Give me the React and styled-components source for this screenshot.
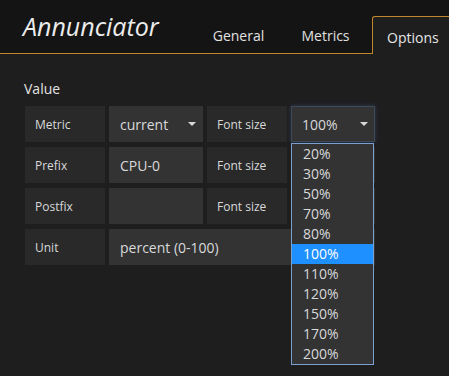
import styled, { createGlobalStyle } from "styled-components";

const Global = createGlobalStyle`
  html, body {
    margin: 0;
    padding: 0;
    background: #1f1e1f;
  }
  body {
    font-family: "Open Sans", "Liberation Sans", sans-serif;
    color: #d8d9da;
  }
`;

const Page = styled.div`
  width: 449px;
  height: 376px;
  overflow: hidden;
  background: #1f1e1f;
`;

const Header = styled.div`
  display: flex;
  align-items: flex-end;
  height: 54px;
  background: #141414;
`;

const Title = styled.div`
  flex: 0 0 auto;
  align-self: stretch;
  display: flex;
  align-items: center;
  padding: 0 0 1px 23px;
  width: 174px;
  font-size: 25px;
  font-style: italic;
  color: #ececec;
  border-bottom: 1px solid #c0872b;
`;

const Tab = styled.div`
  width: ${(p) => p.w}px;
  height: 38px;
  display: flex;
  align-items: center;
  justify-content: center;
  padding-top: 2px;
  font-size: 14px;
  color: #e0e0e0;
  box-sizing: border-box;
  border-bottom: 1px solid #c0872b;
`;

const ActiveTab = styled.div`
  flex: 1 1 auto;
  height: 38px;
  display: flex;
  align-items: center;
  padding: 3px 0 0 14px;
  font-size: 14px;
  color: #e6e6e6;
  box-sizing: border-box;
  background: #1f1e1f;
  border-top: 1px solid #c0872b;
  border-left: 1px solid #c0872b;
  border-top-left-radius: 3px;
`;

const Spacer = styled.div`
  width: ${(p) => p.w}px;
  height: 38px;
  border-bottom: 1px solid #c0872b;
  box-sizing: border-box;
`;

const Body = styled.div`
  padding: 26px 0 0 25px;
`;

const SectionTitle = styled.div`
  font-size: 14px;
  color: #e3e3e3;
  margin: 0 0 8px -1px;
  line-height: 18px;
`;

const Rows = styled.div`
  display: flex;
  flex-direction: column;
  gap: 5px;
`;

const Row = styled.div`
  display: flex;
  gap: 4px;
  height: 36px;
`;

const Label = styled.div`
  width: 80px;
  background: #292929;
  display: flex;
  align-items: center;
  padding-left: 10px;
  box-sizing: border-box;
  font-size: 12px;
  color: #d8d9da;
`;

const Field = styled.div`
  position: relative;
  width: ${(p) => p.w}px;
  background: #333333;
  display: flex;
  align-items: center;
  padding-left: 11px;
  box-sizing: border-box;
  font-size: 14px;
  color: #d8d9da;
  ${(p) =>
    p.focus
      ? "box-shadow: inset 0 0 0 1px #3c4a58, 0 0 4px rgba(82,130,190,0.35);"
      : ""}
`;

const Caret = styled.span`
  position: absolute;
  right: 7px;
  top: 16px;
  width: 0;
  height: 0;
  border-left: 4px solid transparent;
  border-right: 4px solid transparent;
  border-top: 4px solid #d8d9da;
`;

const Menu = styled.div`
  position: absolute;
  left: 0;
  top: 37px;
  width: 81px;
  border: 1px solid #7a9fd0;
  background: #333333;
  z-index: 5;
`;

const Option = styled.div`
  height: 20px;
  line-height: 20px;
  padding-left: 11px;
  font-size: 14px;
  color: ${(p) => (p.selected ? "#ffffff" : "#d8d9da")};
  background: ${(p) => (p.selected ? "#1e90ff" : "transparent")};
`;

const sizes = ["20%", "30%", "50%", "70%", "80%", "100%", "110%", "120%", "150%", "170%", "200%"];

export default function App() {
  return (
    <Page>
      <Global />
      <Header>
        <Title>Annunciator</Title>
        <Spacer w={16} />
        <Tab w={51}>General</Tab>
        <Spacer w={38} />
        <Tab w={47}>Metrics</Tab>
        <Spacer w={23} />
        <ActiveTab>Options</ActiveTab>
      </Header>
      <Body>
        <SectionTitle>Value</SectionTitle>
        <Rows>
          <Row>
            <Label>Metric</Label>
            <Field w={94}>
              current
              <Caret />
            </Field>
            <Label>Font size</Label>
            <Field w={84} focus>
              100%
              <Caret />
              <Menu>
                {sizes.map((s) => (
                  <Option key={s} selected={s === "100%"}>
                    {s}
                  </Option>
                ))}
              </Menu>
            </Field>
          </Row>
          <Row>
            <Label>Prefix</Label>
            <Field w={94}>CPU-0</Field>
            <Label>Font size</Label>
            <Field w={84} />
          </Row>
          <Row>
            <Label>Postfix</Label>
            <Field w={94}></Field>
            <Label>Font size</Label>
            <Field w={84} />
          </Row>
          <Row>
            <Label>Unit</Label>
            <Field w={266}>percent (0-100)</Field>
          </Row>
        </Rows>
      </Body>
    </Page>
  );
}
